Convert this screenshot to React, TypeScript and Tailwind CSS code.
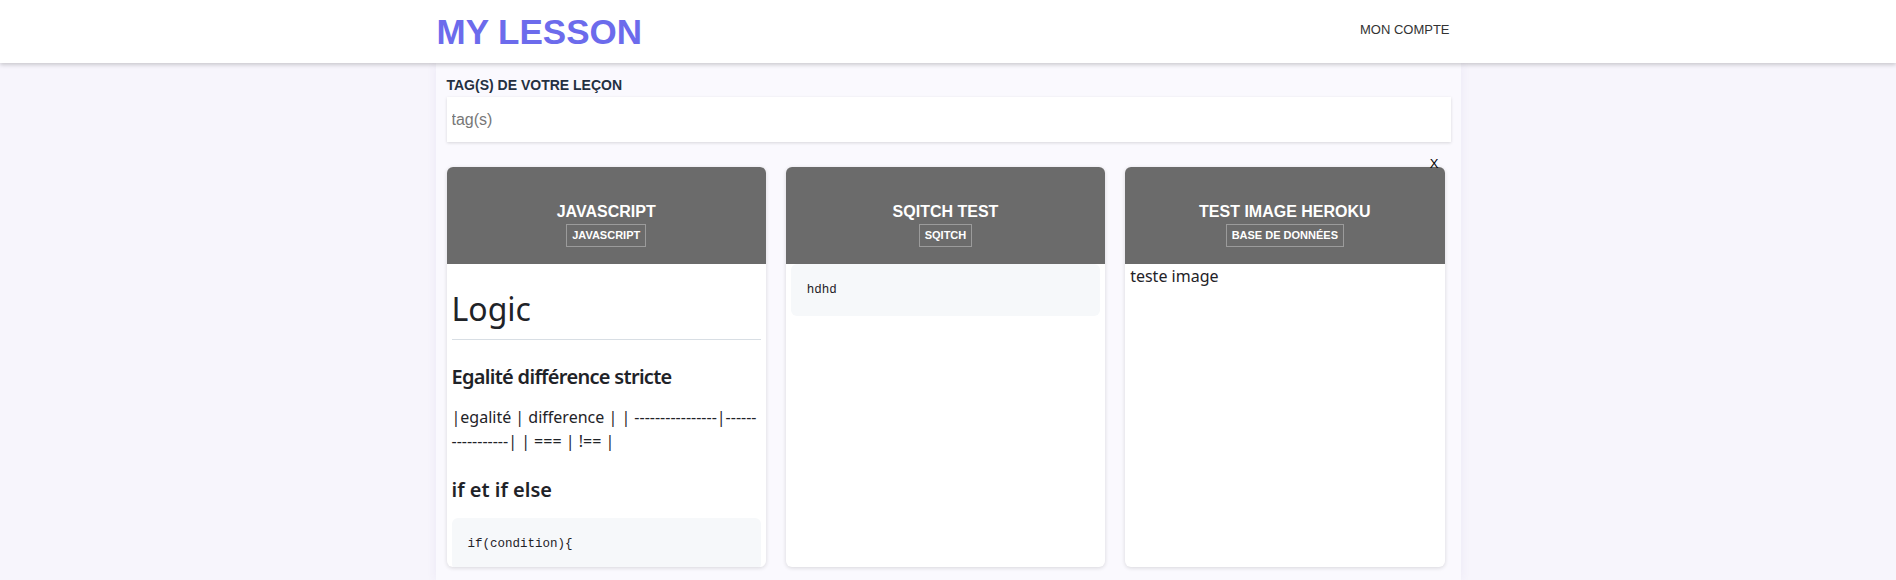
const lessons = [
  { title: "Javascript", tag: "Javascript", kind: "logic" },
  { title: "Sqitch test", tag: "Sqitch", kind: "code" },
  { title: "Test image heroku", tag: "Base de données", kind: "text" },
];

const md = "font-['Noto_Sans',sans-serif] text-[#1f2328]";

function LessonBody({ kind }: { kind: string }) {
  if (kind === "logic") {
    return (
      <div className={`px-[5px] ${md}`}>
        <h1 className="mt-[25px] mb-4 border-b border-[#d8dee4] pb-[9.6px] text-[32px] font-normal leading-[1.25]">
          Logic
        </h1>
        <h3 className="mt-6 mb-4 text-[20px] font-semibold leading-[1.25] tracking-[-0.7px]">
          Egalité différence stricte
        </h3>
        <p className="mb-4 text-[16px] leading-6">
          <span className="whitespace-nowrap">|egalité | difference | | ----------------|------</span>
          <br />
          <span className="whitespace-nowrap">-----------| | === | !== |</span>
        </p>
        <h3 className="mt-6 mb-4 text-[20px] font-semibold leading-[1.25]">if et if else</h3>
        <pre className="rounded-md bg-[#f6f8fa] p-4 font-['Liberation_Mono',monospace] text-[12.5px] leading-[20px]">
          if(condition){"{"}
        </pre>
      </div>
    );
  }
  if (kind === "code") {
    return (
      <pre className="mx-[5px] rounded-md bg-[#f6f8fa] p-4 font-['Liberation_Mono',monospace] text-[12.5px] leading-[20px] text-[#1f2328]">
        hdhd
      </pre>
    );
  }
  return <p className={`px-[5px] text-[16px] leading-6 ${md}`}>teste image</p>;
}

function LessonCard({ title, tag, kind, last }: { title: string; tag: string; kind: string; last?: boolean }) {
  return (
    <div className="relative">
      {last && (
        <button className="absolute -top-[10px] right-[6px] z-10 font-['Liberation_Sans',sans-serif] text-[13px] leading-none text-black">
          X
        </button>
      )}
      <div className="h-[400px] overflow-hidden rounded-md bg-white shadow-[0_1px_4px_rgba(0,0,0,0.14)]">
        <div className="flex h-[97px] flex-col items-center gap-[3px] bg-[#6b6b6b] pt-[35px] font-['Liberation_Sans',sans-serif] text-white">
          <h2 className="text-[16px] font-bold uppercase leading-[19px]">{title}</h2>
          <span className="border border-[#9b9b9b] px-[5px] py-[4px] text-[11px] font-bold uppercase leading-[13px]">
            {tag}
          </span>
        </div>
        <LessonBody kind={kind} />
      </div>
    </div>
  );
}

export default function App() {
  return (
    <div className="min-h-[580px] bg-[#f7f5fc] font-['Liberation_Sans',sans-serif]">
      <header className="relative z-10 h-[63px] bg-white shadow-[0_2px_4px_rgba(0,0,0,0.18)]">
        <div className="mx-auto flex h-full w-[1025px] items-center justify-between pl-[1px]">
          <h1 className="text-[35px] font-bold leading-none text-[#6c6bec]">MY LESSON</h1>
          <a className="mr-[11px] mb-[3px] text-[13px] text-[#333]">MON COMPTE</a>
        </div>
      </header>

      <main className="mx-auto h-[517px] w-[1025px] bg-[#faf9fe] px-[11px] pt-[14px] shadow-[0_0_10px_rgba(90,70,160,0.07)]">
        <label className="block text-[14px] font-bold uppercase leading-[17px] text-[#243041]">
          Tag(s) de votre leçon
        </label>
        <input
          type="text"
          placeholder="tag(s)"
          className="mt-[3px] h-[45px] w-[1004px] bg-white px-[5px] text-[16px] text-[#333] shadow-[0_1px_3px_rgba(0,0,0,0.14)] outline-none placeholder:text-[#777]"
        />
        <div className="mt-[25px] grid w-[998px] grid-cols-3 gap-[20px]">
          {lessons.map((l, i) => (
            <LessonCard key={l.title} {...l} last={i === lessons.length - 1} />
          ))}
        </div>
      </main>
    </div>
  );
}
